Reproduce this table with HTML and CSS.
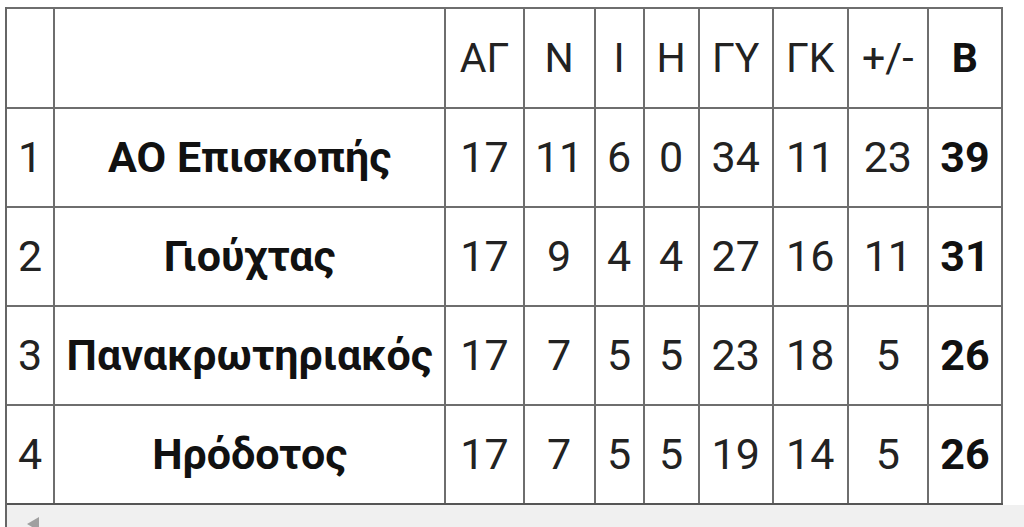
FILE: index.html
```html
<!DOCTYPE html>
<html lang="el">
<head>
<meta charset="utf-8">
<title>Βαθμολογία</title>
<link rel="stylesheet" href="styles.css">
</head>
<body>
<div class="frame">
  <table class="standings">
    <colgroup>
      <col class="c-rank"><col class="c-team"><col class="c-ag"><col class="c-n"><col class="c-i"><col class="c-h"><col class="c-gy"><col class="c-gk"><col class="c-diff"><col class="c-b">
    </colgroup>
    <thead>
      <tr>
        <th></th><th></th><th>ΑΓ</th><th>Ν</th><th>Ι</th><th>Η</th><th>ΓΥ</th><th>ΓΚ</th><th>+/-</th><th class="bold">Β</th>
      </tr>
    </thead>
    <tbody>
      <tr><td>1</td><td class="bold">ΑΟ Επισκοπής</td><td>17</td><td>11</td><td>6</td><td>0</td><td>34</td><td>11</td><td>23</td><td class="bold">39</td></tr>
      <tr><td>2</td><td class="bold">Γιούχτας</td><td>17</td><td>9</td><td>4</td><td>4</td><td>27</td><td>16</td><td>11</td><td class="bold">31</td></tr>
      <tr><td>3</td><td class="bold">Πανακρωτηριακός</td><td>17</td><td>7</td><td>5</td><td>5</td><td>23</td><td>18</td><td>5</td><td class="bold">26</td></tr>
      <tr><td>4</td><td class="bold">Ηρόδοτος</td><td>17</td><td>7</td><td>5</td><td>5</td><td>19</td><td>14</td><td>5</td><td class="bold">26</td></tr>
    </tbody>
  </table>
  <div class="hscroll"><span class="arrow"></span></div>
</div>
</body>
</html>
```
FILE: styles.css
```css
html, body {
  margin: 0;
  padding: 0;
  background: #ffffff;
}
body {
  width: 1024px;
  height: 527px;
  overflow: hidden;
  font-family: Roboto, "Noto Sans", sans-serif;
  color: #222;
}
.frame {
  margin-top: 7px;
  margin-left: 5px;
  border-left: 2px solid #666;
}
.standings {
  border-collapse: collapse;
  table-layout: fixed;
  width: 996px;
  border-top: 2px solid #666;
  border-right: 2px solid #666;
}
.c-rank { width: 47px; }
.c-team { width: 391px; }
.c-ag { width: 78px; }
.c-n { width: 71px; }
.c-i { width: 49px; }
.c-h { width: 55px; }
.c-gy { width: 74px; }
.c-gk { width: 75px; }
.c-diff { width: 80px; }
.c-b { width: 74px; }
.standings th,
.standings td {
  border: 2px solid #6e6e6e;
  height: 97px;
  padding: 0;
  text-align: center;
  vertical-align: middle;
  font-size: 43px;
  font-weight: 400;
  line-height: 1;
  color: #222;
  white-space: nowrap;
}
.standings tr > :first-child {
  border-left: none;
}
.standings tbody tr:last-child td {
  border-bottom: 2px solid #555;
}
.standings th {
  height: 98px;
  font-size: 41px;
}
.standings .bold {
  font-weight: 700;
  color: #111;
}
.hscroll {
  height: 30px;
  background: #f0f0f0;
  margin-right: -20px;
  position: relative;
}
.arrow {
  position: absolute;
  left: 20px;
  top: 12px;
  width: 0;
  height: 0;
  border-top: 7px solid transparent;
  border-bottom: 7px solid transparent;
  border-right: 12px solid #a0a0a0;
}
```
